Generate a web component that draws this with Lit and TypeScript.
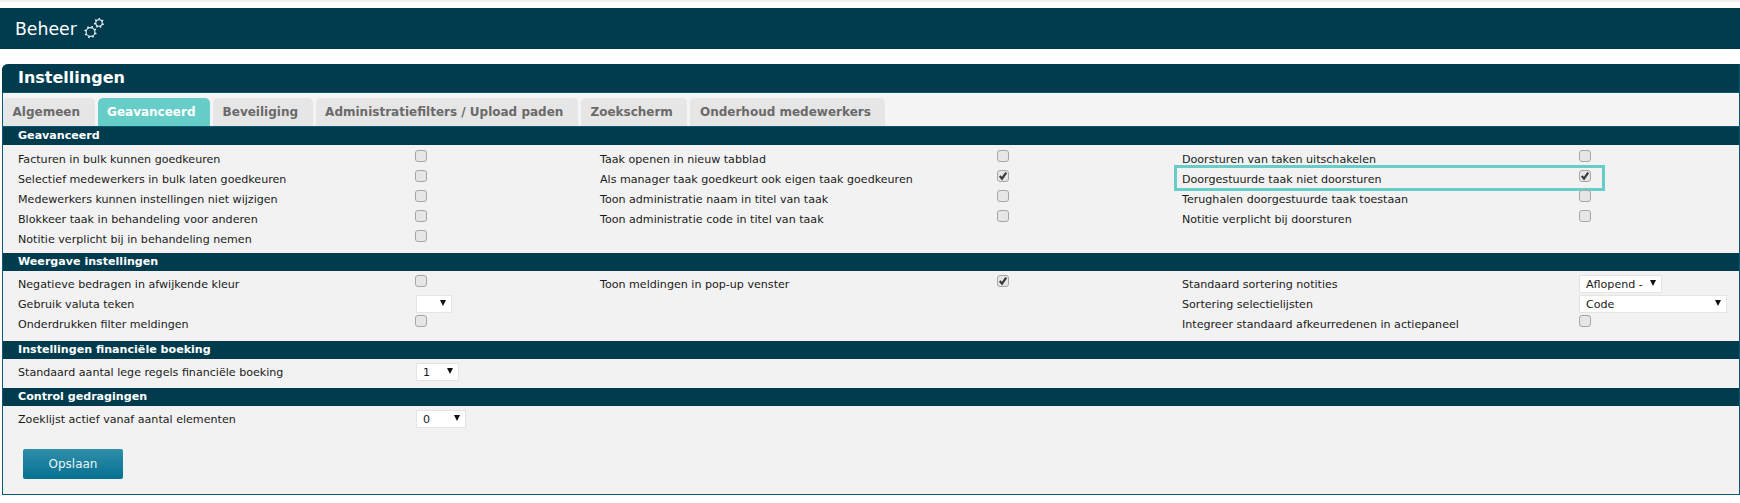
import { LitElement, html, css, svg, nothing } from "lit";
import { customElement } from "lit/decorators.js";

type Ctl = { kind: "c"; on?: boolean } | { kind: "s"; v: string; w: number };
type Item = { l: string; ctl: Ctl; hi?: boolean };
const off: Ctl = { kind: "c" };
const on: Ctl = { kind: "c", on: true };

const sections: { title: string; pb: number; cols: Item[][] }[] = [
  {
    title: "Geavanceerd",
    pb: 4,
    cols: [
      [
        { l: "Facturen in bulk kunnen goedkeuren", ctl: off },
        { l: "Selectief medewerkers in bulk laten goedkeuren", ctl: off },
        { l: "Medewerkers kunnen instellingen niet wijzigen", ctl: off },
        { l: "Blokkeer taak in behandeling voor anderen", ctl: off },
        { l: "Notitie verplicht bij in behandeling nemen", ctl: off },
      ],
      [
        { l: "Taak openen in nieuw tabblad", ctl: off },
        { l: "Als manager taak goedkeurt ook eigen taak goedkeuren", ctl: on },
        { l: "Toon administratie naam in titel van taak", ctl: off },
        { l: "Toon administratie code in titel van taak", ctl: off },
      ],
      [
        { l: "Doorsturen van taken uitschakelen", ctl: off },
        { l: "Doorgestuurde taak niet doorsturen", ctl: on, hi: true },
        { l: "Terughalen doorgestuurde taak toestaan", ctl: off },
        { l: "Notitie verplicht bij doorsturen", ctl: off },
      ],
    ],
  },
  {
    title: "Weergave instellingen",
    pb: 7,
    cols: [
      [
        { l: "Negatieve bedragen in afwijkende kleur", ctl: off },
        { l: "Gebruik valuta teken", ctl: { kind: "s", v: "", w: 36 } },
        { l: "Onderdrukken filter meldingen", ctl: off },
      ],
      [{ l: "Toon meldingen in pop-up venster", ctl: on }],
      [
        { l: "Standaard sortering notities", ctl: { kind: "s", v: "Aflopend -", w: 83 } },
        { l: "Sortering selectielijsten", ctl: { kind: "s", v: "Code", w: 148 } },
        { l: "Integreer standaard afkeurredenen in actiepaneel", ctl: off },
      ],
    ],
  },
  {
    title: "Instellingen financiële boeking",
    pb: 6,
    cols: [[{ l: "Standaard aantal lege regels financiële boeking", ctl: { kind: "s", v: "1", w: 43 } }], [], []],
  },
  {
    title: "Control gedragingen",
    pb: 0,
    cols: [[{ l: "Zoeklijst actief vanaf aantal elementen", ctl: { kind: "s", v: "0", w: 50 } }], [], []],
  },
];

const tabs = ["Algemeen", "Geavanceerd", "Beveiliging", "Administratiefilters / Upload paden", "Zoekscherm", "Onderhoud medewerkers"];

const gear = (cx: number, cy: number, r: number, teeth: number) => {
  const ticks = [];
  for (let i = 0; i < teeth; i++) {
    const a = (i / teeth) * Math.PI * 2 + 0.3;
    ticks.push(
      svg`<line x1=${cx + Math.cos(a) * r} y1=${cy + Math.sin(a) * r} x2=${cx + Math.cos(a) * (r + 1.8)} y2=${cy + Math.sin(a) * (r + 1.8)} stroke-width="1.6"></line>`
    );
  }
  return svg`<circle cx=${cx} cy=${cy} r=${r} fill="none"></circle>${ticks}`;
};

@customElement("app-root")
export class AppRoot extends LitElement {
  static styles = css`
    :host {
      display: block;
      height: 503px;
      background: #fff;
      font-family: "DejaVu Sans", Verdana, sans-serif;
      font-size: 11.1px;
      color: #1a1a1a;
      overflow: hidden;
    }
    .topline { height: 2px; background: #f0f0f0; margin-bottom: 6px; }
    .beheer {
      height: 41px;
      box-sizing: border-box;
      padding-top: 1px;
      background: #003c4e;
      color: #fff;
      display: flex;
      align-items: center;
      gap: 6px;
      padding-left: 15px;
      font-size: 17.3px;
      margin-bottom: 15px;
    }
    .beheer svg { stroke: #e8eef0; stroke-width: 1.1; flex: none; margin-top: -4px; }
    .panel {
      margin-left: 2px;
      height: 431px;
      box-sizing: border-box;
      border: 1px solid #035a74;
      border-top: 0;
      border-radius: 6px 0 0 0;
      background: #f2f2f2;
      display: flex;
      flex-direction: column;
    }
    .phead {
      height: 28px;
      flex: none;
      box-sizing: border-box;
      background: #003c4e;
      color: #fff;
      font-size: 16px;
      font-weight: 700;
      padding: 4px 0 0 16px;
      border-radius: 6px 0 0 0;
      margin-left: -1px;
    }
    .tabs {
      display: flex;
      gap: 3px;
      height: 34px;
      flex: none;
      box-sizing: border-box;
      padding-top: 5px;
      background: #f4f4f4;
      border-top: 1px solid #035a74;
    }
    .tab {
      box-sizing: border-box;
      height: 29px;
      background: #e6e6e6;
      color: #6a6a6a;
      font-weight: 700;
      font-size: 12px;
      padding: 7px 14.6px 0 9.5px;
      border-radius: 5px 5px 0 0;
    }
    .tab.active { background: #66cdc9; color: #fff; }
    .sec {
      height: 18px;
      box-sizing: border-box;
      background: #003c4e;
      color: #fff;
      font-weight: 700;
      font-size: 11.1px;
      padding: 2px 0 0 15px;
      flex: none;
    }
    .sec.first {
      height: 19px;
      border-top: 1px solid #035a74;
    }
    .body {
      display: grid;
      grid-template-columns: 582px 582px 1fr;
      padding: 3px 0 0 15px;
    }
    .sec.first + .body { padding-top: 4px; }
    .row {
      height: 20px;
      display: flex;
      align-items: center;
      position: relative;
      white-space: nowrap;
    }
    .lab { flex: none; width: 397px; }
    .box {
      box-sizing: border-box;
      width: 12px;
      height: 12px;
      border: 1px solid #a6a6a6;
      border-radius: 3px;
      background: #e6e6e6;
      position: relative;
      margin-top: -6px;
      flex: none;
    }
    .box svg { position: absolute; left: 0; top: 0; }
    .sel {
      box-sizing: border-box;
      height: 18px;
      background: #fff;
      border: 1px solid #e4e4e4;
      display: flex;
      align-items: center;
      justify-content: space-between;
      padding: 0 5px 0 6px;
      overflow: hidden;
      flex: none;
    }
    .body > div:first-child .sel { margin-left: 1px; }
    .arrow { width: 0; height: 0; border-left: 3.5px solid transparent; border-right: 3.5px solid transparent; border-top: 6px solid #111; margin-top: -3px; flex: none; }
    .hi {
      position: absolute;
      left: -8px;
      top: -4px;
      width: 431px;
      height: 26px;
      border: 3px solid #66cdc9;
      box-sizing: border-box;
      pointer-events: none;
    }
    .foot { padding: 20px 0 0 20px; }
    .btn {
      width: 100px;
      height: 30px;
      box-sizing: border-box;
      border: 0;
      border-radius: 2px;
      padding: 0;
      background: linear-gradient(#2f8fab, #05708f);
      color: #eaf4f7;
      font-family: inherit;
      font-size: 12px;
      display: block;
    }
  `;

  private ctl(c: Ctl) {
    if (c.kind === "c") {
      return html`<span class="box" role="checkbox" aria-checked=${c.on ? "true" : "false"}>
        ${c.on
          ? html`<svg width="10" height="10" viewBox="0 0 10 10"><path d="M1.8 5 4 7.6 8.2 1.6" fill="none" stroke="#3a3a3a" stroke-width="2.2"></path></svg>`
          : nothing}
      </span>`;
    }
    return html`<span class="sel" style="width:${c.w}px"><span>${c.v}</span><span class="arrow"></span></span>`;
  }

  render() {
    return html`
      <div class="topline"></div>
      <div class="beheer">
        <span>Beheer</span>
        <svg width="24" height="24" viewBox="0 0 24 24">${gear(7.5, 17, 4.4, 8)}${gear(16, 8, 3.2, 7)}</svg>
      </div>
      <div class="panel">
        <div class="phead">Instellingen</div>
        <div class="tabs">
          ${tabs.map((t, i) => html`<div class="tab ${i === 1 ? "active" : ""}">${t}</div>`)}
        </div>
        ${sections.map(
          (s, si) => html`
            <div class="sec ${si === 0 ? "first" : ""}">${s.title}</div>
            <div class="body" style="padding-bottom:${s.pb}px">
              ${s.cols.map(
                (col) => html`<div>
                  ${col.map(
                    (it) => html`<div class="row">
                      <span class="lab">${it.l}</span>${this.ctl(it.ctl)}
                      ${it.hi ? html`<span class="hi"></span>` : nothing}
                    </div>`
                  )}
                </div>`
              )}
            </div>
          `
        )}
        <div class="foot"><button class="btn">Opslaan</button></div>
      </div>
    `;
  }
}
